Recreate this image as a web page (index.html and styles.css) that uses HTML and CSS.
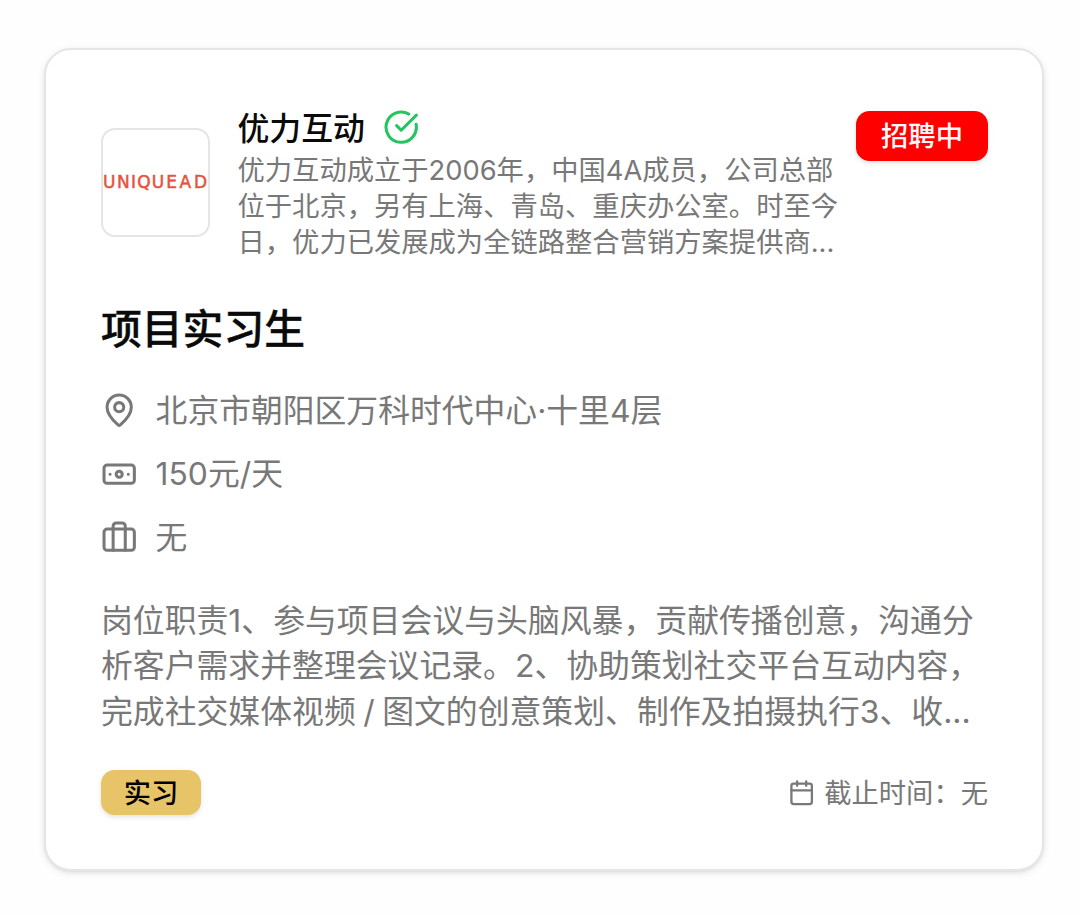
FILE: index.html
```html
<!DOCTYPE html>
<html lang="zh-CN">
<head>
    <meta charset="UTF-8">
    <meta name="viewport" content="width=device-width, initial-scale=1.0">
    <title>项目实习生</title>
    <link rel="stylesheet" href="styles.css">
</head>
<body>

<div class="card">
    <!-- Company -->
    <div class="company">
        <div class="logo">
            <svg viewBox="0 0 105 24">
                <text y="18" x="0 14 28 34.3 48.8 63.2 76.4 91">UNIQUEAD</text>
            </svg>
        </div>
        <div class="company-info">
            <div class="company-name">
                <span>优力互动</span>
                <svg class="icon verified" viewBox="0 0 24 24">
                    <path d="M21.801 10A10 10 0 1 1 17 3.335"/>
                    <path d="m9 11 3 3L22 4"/>
                </svg>
            </div>
            <p class="company-text">优力互动成立于2006年，中国4A成员，公司总部<br>位于北京，另有上海、青岛、重庆办公室。时至今<br>日，优力已发展成为全链路整合营销方案提供商...</p>
        </div>
        <span class="badge badge-status">招聘中</span>
    </div>

    <h1>项目实习生</h1>

    <!-- Job details -->
    <ul class="details">
        <li>
            <svg class="icon" viewBox="0 0 24 24">
                <path d="M20 10c0 4.993-5.539 10.193-7.399 11.799a1 1 0 0 1-1.202 0C9.539 20.193 4 14.993 4 10a8 8 0 0 1 16 0"/>
                <circle cx="12" cy="10" r="3"/>
            </svg>
            <span>北京市朝阳区万科时代中心·十里4层</span>
        </li>
        <li>
            <svg class="icon" viewBox="0 0 24 24">
                <rect width="20" height="12" x="2" y="6" rx="2"/>
                <circle cx="12" cy="12" r="2"/>
                <path d="M6 12h.01M18 12h.01"/>
            </svg>
            <span>150元/天</span>
        </li>
        <li>
            <svg class="icon" viewBox="0 0 24 24">
                <path d="M16 20V4a2 2 0 0 0-2-2h-4a2 2 0 0 0-2 2v16"/>
                <rect width="20" height="14" x="2" y="6" rx="2"/>
            </svg>
            <span>无</span>
        </li>
    </ul>

    <p class="description">岗位职责1、参与项目会议与头脑风暴，贡献传播创意，沟通分<br>析客户需求并整理会议记录。2、协助策划社交平台互动内容，<br>完成社交媒体视频 / 图文的创意策划、制作及拍摄执行3、收...</p>

    <div class="card-footer">
        <span class="badge badge-type">实习</span>
        <div class="deadline">
            <svg class="icon" viewBox="0 0 24 24">
                <path d="M8 2v4M16 2v4"/>
                <rect width="18" height="18" x="3" y="4" rx="2"/>
                <path d="M3 10h18"/>
            </svg>
            <span>截止时间：无</span>
        </div>
    </div>
</div>

</body>
</html>
```
FILE: styles.css
```css
* {
    box-sizing: border-box;
}
body {
    min-height: 100vh;
    margin: 0;
    padding: 48px 36px 0 44px;
    background-color: #fefefe;
    color: #0a0a0a;
    font-family: Inter, "Noto Sans CJK SC", sans-serif;
}
h1, p, ul {
    margin: 0;
    padding: 0;
}
.card {
    height: 823px;
    padding: 55px 54px 0 55px;
    background-color: white;
    border: 2px solid #e5e5e5;
    border-radius: 27px;
    box-shadow: 0 2px 7px rgba(0, 0, 0, 0.1), 0 2px 4px -2px rgba(0, 0, 0, 0.1);
}
.icon {
    flex-shrink: 0;
    width: 36.4px;
    height: 36.4px;
    fill: none;
    stroke: currentColor;
    stroke-width: 2;
    stroke-linecap: round;
    stroke-linejoin: round;
}
.badge {
    border-radius: 13.6px;
    font-size: 27.3px;
    box-shadow: 0 2px 5px rgba(0, 0, 0, 0.12);
}

/* Company */
.company {
    display: flex;
    align-items: center;
}
.logo {
    display: flex;
    align-items: center;
    flex-shrink: 0;
    width: 109px;
    height: 109px;
    border: 2px solid #e5e5e5;
    border-radius: 14px;
}
.logo svg {
    width: 105px;
    height: 24px;
}
.logo text {
    fill: #e5533d;
    font-family: "DejaVu Sans", sans-serif;
    font-size: 17px;
    stroke: #e5533d;
    stroke-width: 0.5;
}
.company-info {
    flex: 1;
    margin-left: 27.5px;
    white-space: nowrap;
}
.company-name {
    display: flex;
    align-items: center;
    gap: 18px;
    height: 45.5px;
    font-size: 31.85px;
    font-weight: 500;
}
.company-name span {
    padding-bottom: 4px;
}
.company-name .icon {
    margin-bottom: 1px;
}
.verified {
    color: #22c55e;
}
.company-text {
    padding-top: 2px;
    margin-bottom: -2px;
    color: #787878;
    font-size: 27.3px;
    line-height: 36.4px;
}
.badge-status {
    align-self: flex-start;
    width: 132px;
    height: 50px;
    padding-top: 1.5px;
    margin-top: 5.5px;
    background-color: #ff0000;
    color: #fafafa;
    font-weight: 500;
    line-height: 50px;
    text-align: center;
}

/* Job details */
h1 {
    margin-top: 46px;
    font-size: 40.8px;
    font-weight: 500;
    line-height: 46px;
    -webkit-text-stroke: 0.4px #0a0a0a;
}
.details {
    display: flex;
    flex-direction: column;
    gap: 18.2px;
    margin-top: 36px;
    color: #787878;
    font-size: 31.8px;
    line-height: 45.5px;
    list-style: none;
}
.details li {
    display: flex;
    align-items: center;
    gap: 18.2px;
}
.description {
    margin-top: 37px;
    color: #787878;
    font-size: 31.85px;
    line-height: 45.5px;
    white-space: nowrap;
    word-spacing: -1.5px;
}

/* Footer */
.card-footer {
    display: flex;
    align-items: center;
    justify-content: space-between;
    margin-top: 35.5px;
}
.badge-type {
    width: 100px;
    height: 45.5px;
    padding-top: 1px;
    background-color: #e7c468;
    color: #000;
    font-weight: 500;
    line-height: 45.5px;
    text-align: center;
}
.deadline {
    display: flex;
    align-items: center;
    gap: 9px;
    color: #787878;
    font-size: 27.3px;
}
.deadline span {
    padding-bottom: 3px;
}
.deadline .icon {
    width: 27.3px;
    height: 27.3px;
}
```
